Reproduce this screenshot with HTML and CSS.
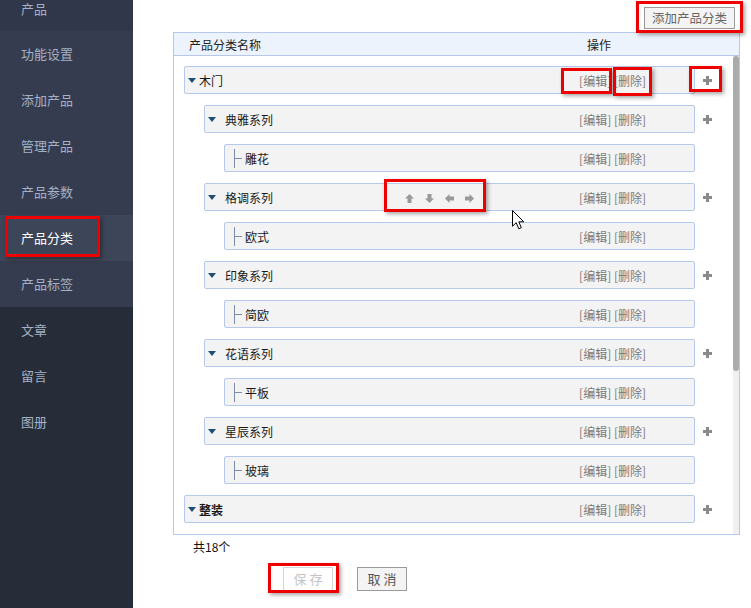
FILE: index.html
```html
<!DOCTYPE html>
<html lang="zh-CN">
<head>
<meta charset="utf-8">
<title>产品分类</title>
<link rel="stylesheet" href="styles.css">
</head>
<body>
<div class="app">
  <aside class="side">
    <ul class="nav">
      <li class="nav-parent">产品</li>
      <li class="nav-sub">功能设置</li>
      <li class="nav-sub">添加产品</li>
      <li class="nav-sub">管理产品</li>
      <li class="nav-sub">产品参数</li>
      <li class="nav-sub active">产品分类</li>
      <li class="nav-sub">产品标签</li>
      <li class="nav-top">文章</li>
      <li class="nav-top">留言</li>
      <li class="nav-top">图册</li>
    </ul>
  </aside>

  <main class="main">
    <div class="toolbar">
      <button class="btn btn-add">添加产品分类</button>
    </div>

    <div class="table">
      <div class="thead">
        <span class="th-name">产品分类名称</span>
        <span class="th-op">操作</span>
      </div>
      <div class="tbody">
        <div class="rows">
          <div class="row lv1">
            <div class="node"><i class="tri"></i><span class="name">木门</span><span class="ops">[编辑] [删除]</span></div>
            <span class="add"><svg width="9" height="9" viewBox="0 0 9 9"><path d="M3 0h3v3h3v3H6v3H3V6H0V3h3z" fill="#8a8a8a"/></svg></span>
          </div>
          <div class="row lv2">
            <div class="node"><i class="tri"></i><span class="name">典雅系列</span><span class="ops">[编辑] [删除]</span></div>
            <span class="add"><svg width="9" height="9" viewBox="0 0 9 9"><path d="M3 0h3v3h3v3H6v3H3V6H0V3h3z" fill="#8a8a8a"/></svg></span>
          </div>
          <div class="row lv3">
            <div class="node"><i class="branch"></i><span class="name">雕花</span><span class="ops">[编辑] [删除]</span></div>
            <span class="add"></span>
          </div>
          <div class="row lv2">
            <div class="node"><i class="tri"></i><span class="name">格调系列</span>
              <span class="moves">
                <svg width="9" height="9" viewBox="0 0 9 9"><path d="M4.5 0L9 4.5H6.5V9h-4V4.5H0z" fill="#999"/></svg>
                <svg width="9" height="9" viewBox="0 0 9 9"><path d="M4.5 9L9 4.5H6.5V0h-4v4.5H0z" fill="#999"/></svg>
                <svg width="9" height="9" viewBox="0 0 9 9"><path d="M0 4.5L4.5 0v2.5H9v4H4.5V9z" fill="#999"/></svg>
                <svg width="9" height="9" viewBox="0 0 9 9"><path d="M9 4.5L4.5 0v2.5H0v4h4.5V9z" fill="#999"/></svg>
              </span>
              <span class="ops">[编辑] [删除]</span></div>
            <span class="add"><svg width="9" height="9" viewBox="0 0 9 9"><path d="M3 0h3v3h3v3H6v3H3V6H0V3h3z" fill="#8a8a8a"/></svg></span>
          </div>
          <div class="row lv3">
            <div class="node"><i class="branch"></i><span class="name">欧式</span><span class="ops">[编辑] [删除]</span></div>
            <span class="add"></span>
          </div>
          <div class="row lv2">
            <div class="node"><i class="tri"></i><span class="name">印象系列</span><span class="ops">[编辑] [删除]</span></div>
            <span class="add"><svg width="9" height="9" viewBox="0 0 9 9"><path d="M3 0h3v3h3v3H6v3H3V6H0V3h3z" fill="#8a8a8a"/></svg></span>
          </div>
          <div class="row lv3">
            <div class="node"><i class="branch"></i><span class="name">简欧</span><span class="ops">[编辑] [删除]</span></div>
            <span class="add"></span>
          </div>
          <div class="row lv2">
            <div class="node"><i class="tri"></i><span class="name">花语系列</span><span class="ops">[编辑] [删除]</span></div>
            <span class="add"><svg width="9" height="9" viewBox="0 0 9 9"><path d="M3 0h3v3h3v3H6v3H3V6H0V3h3z" fill="#8a8a8a"/></svg></span>
          </div>
          <div class="row lv3">
            <div class="node"><i class="branch"></i><span class="name">平板</span><span class="ops">[编辑] [删除]</span></div>
            <span class="add"></span>
          </div>
          <div class="row lv2">
            <div class="node"><i class="tri"></i><span class="name">星辰系列</span><span class="ops">[编辑] [删除]</span></div>
            <span class="add"><svg width="9" height="9" viewBox="0 0 9 9"><path d="M3 0h3v3h3v3H6v3H3V6H0V3h3z" fill="#8a8a8a"/></svg></span>
          </div>
          <div class="row lv3">
            <div class="node"><i class="branch"></i><span class="name">玻璃</span><span class="ops">[编辑] [删除]</span></div>
            <span class="add"></span>
          </div>
          <div class="row lv1">
            <div class="node"><i class="tri"></i><span class="name strong">整装</span><span class="ops">[编辑] [删除]</span></div>
            <span class="add"><svg width="9" height="9" viewBox="0 0 9 9"><path d="M3 0h3v3h3v3H6v3H3V6H0V3h3z" fill="#8a8a8a"/></svg></span>
          </div>
        </div>
        <div class="scrollbar"><div class="thumb"></div></div>
      </div>
    </div>

    <div class="count">共18个</div>

    <div class="actions">
      <button class="btn btn-save" disabled>保 存</button>
      <button class="btn btn-cancel">取 消</button>
    </div>
  </main>
</div>

<div class="marks">
  <span class="mark m-side"></span>
  <span class="mark m-add"></span>
  <span class="mark m-edit"></span>
  <span class="mark m-del"></span>
  <span class="mark m-plus"></span>
  <span class="mark m-move"></span>
  <span class="mark m-save"></span>
  <svg class="cursor" width="13" height="20" viewBox="0 0 13 20"><path d="M0.5 0.5V16.2L4.2 12.7L6.8 18.8L9.3 17.7L6.8 11.8H11.8Z" fill="#fff" stroke="#000" stroke-width="1" stroke-linejoin="miter"/></svg>
</div>
</body>
</html>
```

FILE: styles.css
```css
* { box-sizing: border-box; }
html, body { margin: 0; padding: 0; }
body {
  width: 751px;
  height: 608px;
  overflow: hidden;
  background: #fff;
  font-family: "Noto Sans CJK SC", "Microsoft YaHei", sans-serif;
  color: #222;
  position: relative;
}
.app { display: flex; height: 608px; }

/* sidebar */
.side { width: 133px; flex: none; background: #262d39; overflow: hidden; }
.nav { list-style: none; margin: 0; padding: 0; }
.nav li {
  height: 46px;
  line-height: 46px;
  padding-left: 21px;
  font-size: 13px;
  color: #a3b0c5;
}
.nav li.nav-parent { height: 31px; line-height: 17px; background: #30374a; }
.nav-sub { background: #353c4f; }
.nav-sub.active { background: #3d4558; color: #fff; }
.nav-top { background: #262d39; }

/* main */
.main { flex: 1; padding: 0 11px 0 40px; display: flex; flex-direction: column; }
.toolbar { height: 32px; display: flex; justify-content: flex-end; align-items: flex-start; padding: 7px 5px 0 0; }
.btn {
  font-family: inherit;
  font-size: 12px;
  background: #f4f4f4;
  border: 1px solid #9a9a9a;
  color: #666;
  padding: 0;
  border-radius: 0;
}
.btn-add { width: 91px; height: 22px; line-height: 20px; font-size: 12.5px; }

.table { border: 1px solid #b7c9ea; display: flex; flex-direction: column; height: 503px; }
.thead {
  height: 23px;
  flex: none;
  background: #edf3fc;
  border-bottom: 1px solid #b7c9ea;
  display: flex;
  align-items: center;
  font-size: 12px;
  color: #222;
}
.th-name { padding-left: 15px; }
.th-op { margin-left: auto; margin-right: 128px; }

.tbody { flex: 1; display: flex; overflow: hidden; }
.rows { flex: 1; overflow: hidden; padding-top: 10px; }
.scrollbar { width: 6px; flex: none; background: #f0f0f0; }
.thumb { height: 315px; background: #ababab; border-radius: 3px; }

.row { display: flex; height: 28px; margin-bottom: 11px; }
.lv1 { padding-left: 10px; }
.lv2 { padding-left: 30px; }
.lv3 { padding-left: 50px; }
.node {
  flex: 1;
  display: flex;
  align-items: center;
  background: #f3f3f3;
  border: 1px solid #b7c9ea;
  border-radius: 2px;
  font-size: 12px;
  position: relative;
  padding-left: 3px;
}
.lv3 .node { padding-left: 9px; }
.tri {
  width: 0; height: 0;
  border-left: 4px solid transparent;
  border-right: 4px solid transparent;
  border-top: 5px solid #1e4d75;
  margin-top: 1px;
}
.lv1 .name { margin-left: 3px; }
.lv2 .name { margin-left: 9px; }
.lv3 .name { margin-left: 3px; }
.branch {
  width: 8px; height: 19px;
  border-left: 1px solid #7b8ea8;
  position: relative;
}
.branch::after {
  content: "";
  position: absolute;
  left: 0; top: 9px;
  width: 7px; height: 1px;
  background: #7b8ea8;
}
.name { color: #1a1a1a; }
.name.strong { font-weight: 700; }
.ops { margin-left: auto; margin-right: 48px; color: #7a7a7a; }
.add { width: 38px; flex: none; display: flex; align-items: center; padding-left: 8px; }
.add svg { display: block; }

.moves { position: absolute; left: 200px; top: 10px; display: flex; gap: 11px; }
.moves svg { display: block; }

.count { font-size: 12px; padding: 3px 0 0 20px; height: 26px; line-height: 18px; color: #111; }
.actions { display: flex; gap: 24px; padding: 6px 0 0 110px; }
.btn-save, .btn-cancel { width: 50px; height: 24px; font-size: 13px; line-height: 22px; }
.btn-save { background: #fff; border-color: #d6d6d6; color: #c4c4c4; }
.btn-cancel { border-color: #9a9a9a; color: #555; background: #f4f4f4; }

/* annotation overlays */
.marks { position: absolute; left: 0; top: 0; width: 751px; height: 608px; pointer-events: none; }
.mark {
  position: absolute;
  border: 3px solid #ee0000;
  box-shadow: 2px 2px 4px rgba(0,0,0,0.35);
}
.m-side { left: 5px; top: 216px; width: 95px; height: 41px; }
.m-add { left: 636px; top: 1px; width: 107px; height: 32px; }
.m-edit { left: 561px; top: 68px; width: 51px; height: 26px; }
.m-del { left: 613px; top: 67px; width: 39px; height: 29px; }
.m-plus { left: 689px; top: 66px; width: 33px; height: 26px; }
.m-move { left: 384px; top: 179px; width: 102px; height: 33px; }
.m-save { left: 268px; top: 563px; width: 71px; height: 30px; }
.cursor { position: absolute; left: 512px; top: 210px; }
```
